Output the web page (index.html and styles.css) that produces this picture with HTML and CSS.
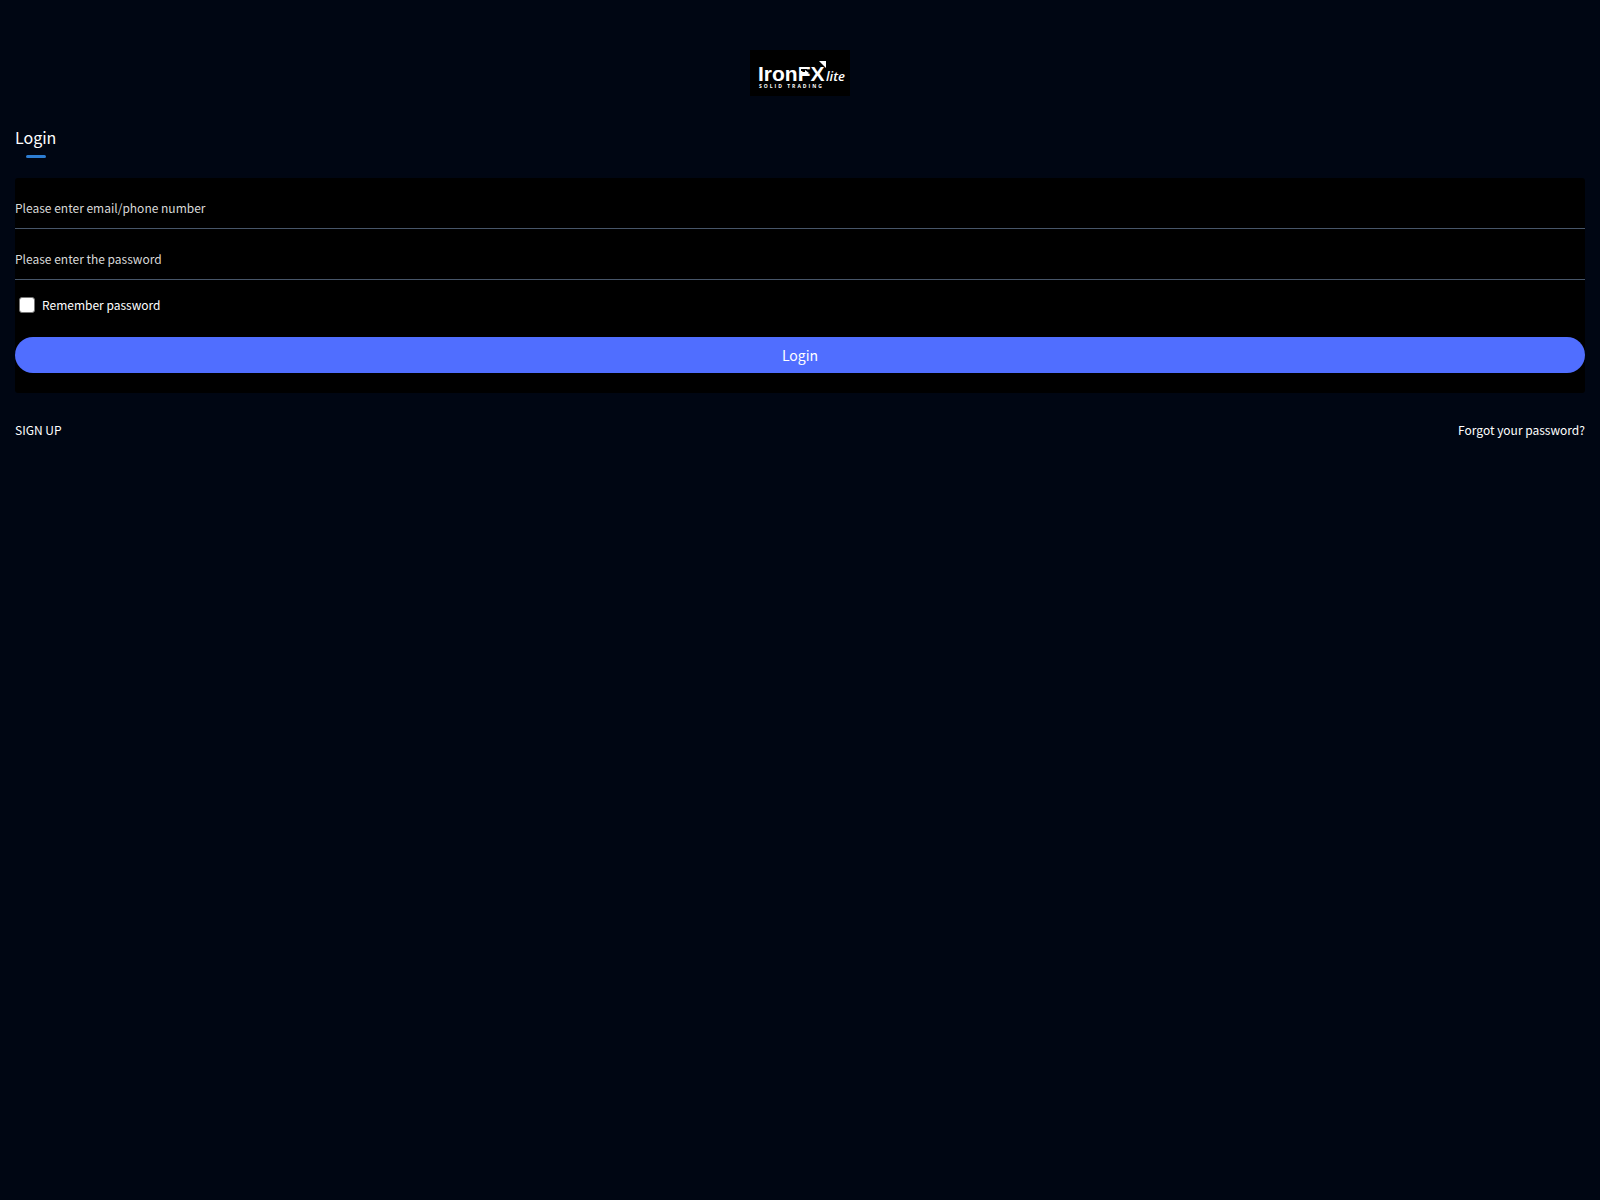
FILE: index.html
```html
<!DOCTYPE html>
<html lang="en">
<head>
  <meta charset="utf-8">
  <meta name="viewport" content="width=device-width, initial-scale=1">
  <title>Login</title>
  <link rel="stylesheet" href="styles.css">
</head>
<body>
  <main class="page">
    <svg class="logo" viewBox="0 0 100 46" role="img" aria-label="IronFX lite, solid trading">
      <rect width="100" height="46" fill="#000"/>
      <g fill="#fff">
        <text class="logo-name" x="8" y="31">IronFX</text>
        <path d="M69 11h7v7z"/>
        <text class="logo-lite" x="76" y="31">lite</text>
        <text class="logo-tagline" x="9" y="38">SOLID TRADING</text>
      </g>
      <path d="M51 19h6v2h-6z" fill="#000"/>
      <path d="M50 22h5v-2l4 3-4 3v-2h-5z" fill="#fff"/>
    </svg>
    <h1 class="title">Login</h1>
    <form class="card">
      <input class="field" type="text" aria-label="Email or phone number" placeholder="Please enter email/phone number">
      <input class="field" type="password" aria-label="Password" placeholder="Please enter the password">
      <label class="remember"><input class="checkbox" type="checkbox">Remember password</label>
      <button class="submit" type="submit">Login</button>
    </form>
    <nav class="links">
      <a href="#signup">SIGN UP</a>
      <a href="#forgot">Forgot your password?</a>
    </nav>
  </main>
</body>
</html>
```
FILE: styles.css
```css
* {
  box-sizing: border-box;
}

body {
  margin: 0;
  min-height: 100vh;
  background: #000613;
  color: #fff;
  font: 12px/18px "Noto Sans CJK SC", sans-serif;
}

.page {
  display: flex;
  flex-direction: column;
  padding: 50px 15px 0;
}

.logo {
  width: 100px;
  height: 46px;
  align-self: center;
}

.logo-name {
  font: 700 21px "Liberation Sans", sans-serif;
}

.logo-lite {
  font: italic 600 13px "Open Sans", sans-serif;
}

.logo-tagline {
  font: 700 5px "Open Sans", sans-serif;
  letter-spacing: 2px;
}

.title {
  display: flex;
  flex-direction: column;
  align-items: center;
  align-self: flex-start;
  gap: 4px;
  margin: 28px 0 20px;
  font-size: 16px;
  font-weight: 400;
  line-height: 27px;
}

.title::after {
  content: "";
  width: 20px;
  height: 3px;
  border-radius: 2px;
  background: #2d7dd2;
}

.card {
  display: flex;
  flex-direction: column;
  padding-bottom: 20px;
  border-radius: 3px;
  background: #000;
}

.field {
  width: 100%;
  height: 51px;
  padding: 8px 0 0;
  border: 0;
  border-bottom: 1px solid #475569;
  outline: 0;
  background: transparent;
  color: #fff;
  font: inherit;
}

.field::placeholder {
  color: #d9d9d9;
  opacity: 1;
}

.remember {
  display: flex;
  align-items: center;
  align-self: flex-start;
  gap: 7px;
  margin: 16px 0 23px 4px;
}

.checkbox {
  appearance: none;
  width: 16px;
  height: 16px;
  margin: 0;
  border: 1px solid #767676;
  border-radius: 3px;
  background: #fff;
}

.checkbox:checked {
  background: #506eff;
}

.submit {
  height: 36px;
  padding: 0;
  border: 0;
  border-radius: 18px;
  background: #506eff;
  color: #fff;
  font: inherit;
  font-size: 14px;
}

.links {
  display: flex;
  justify-content: space-between;
  margin-top: 28px;
}

.links a {
  color: inherit;
  text-decoration: none;
}
```
